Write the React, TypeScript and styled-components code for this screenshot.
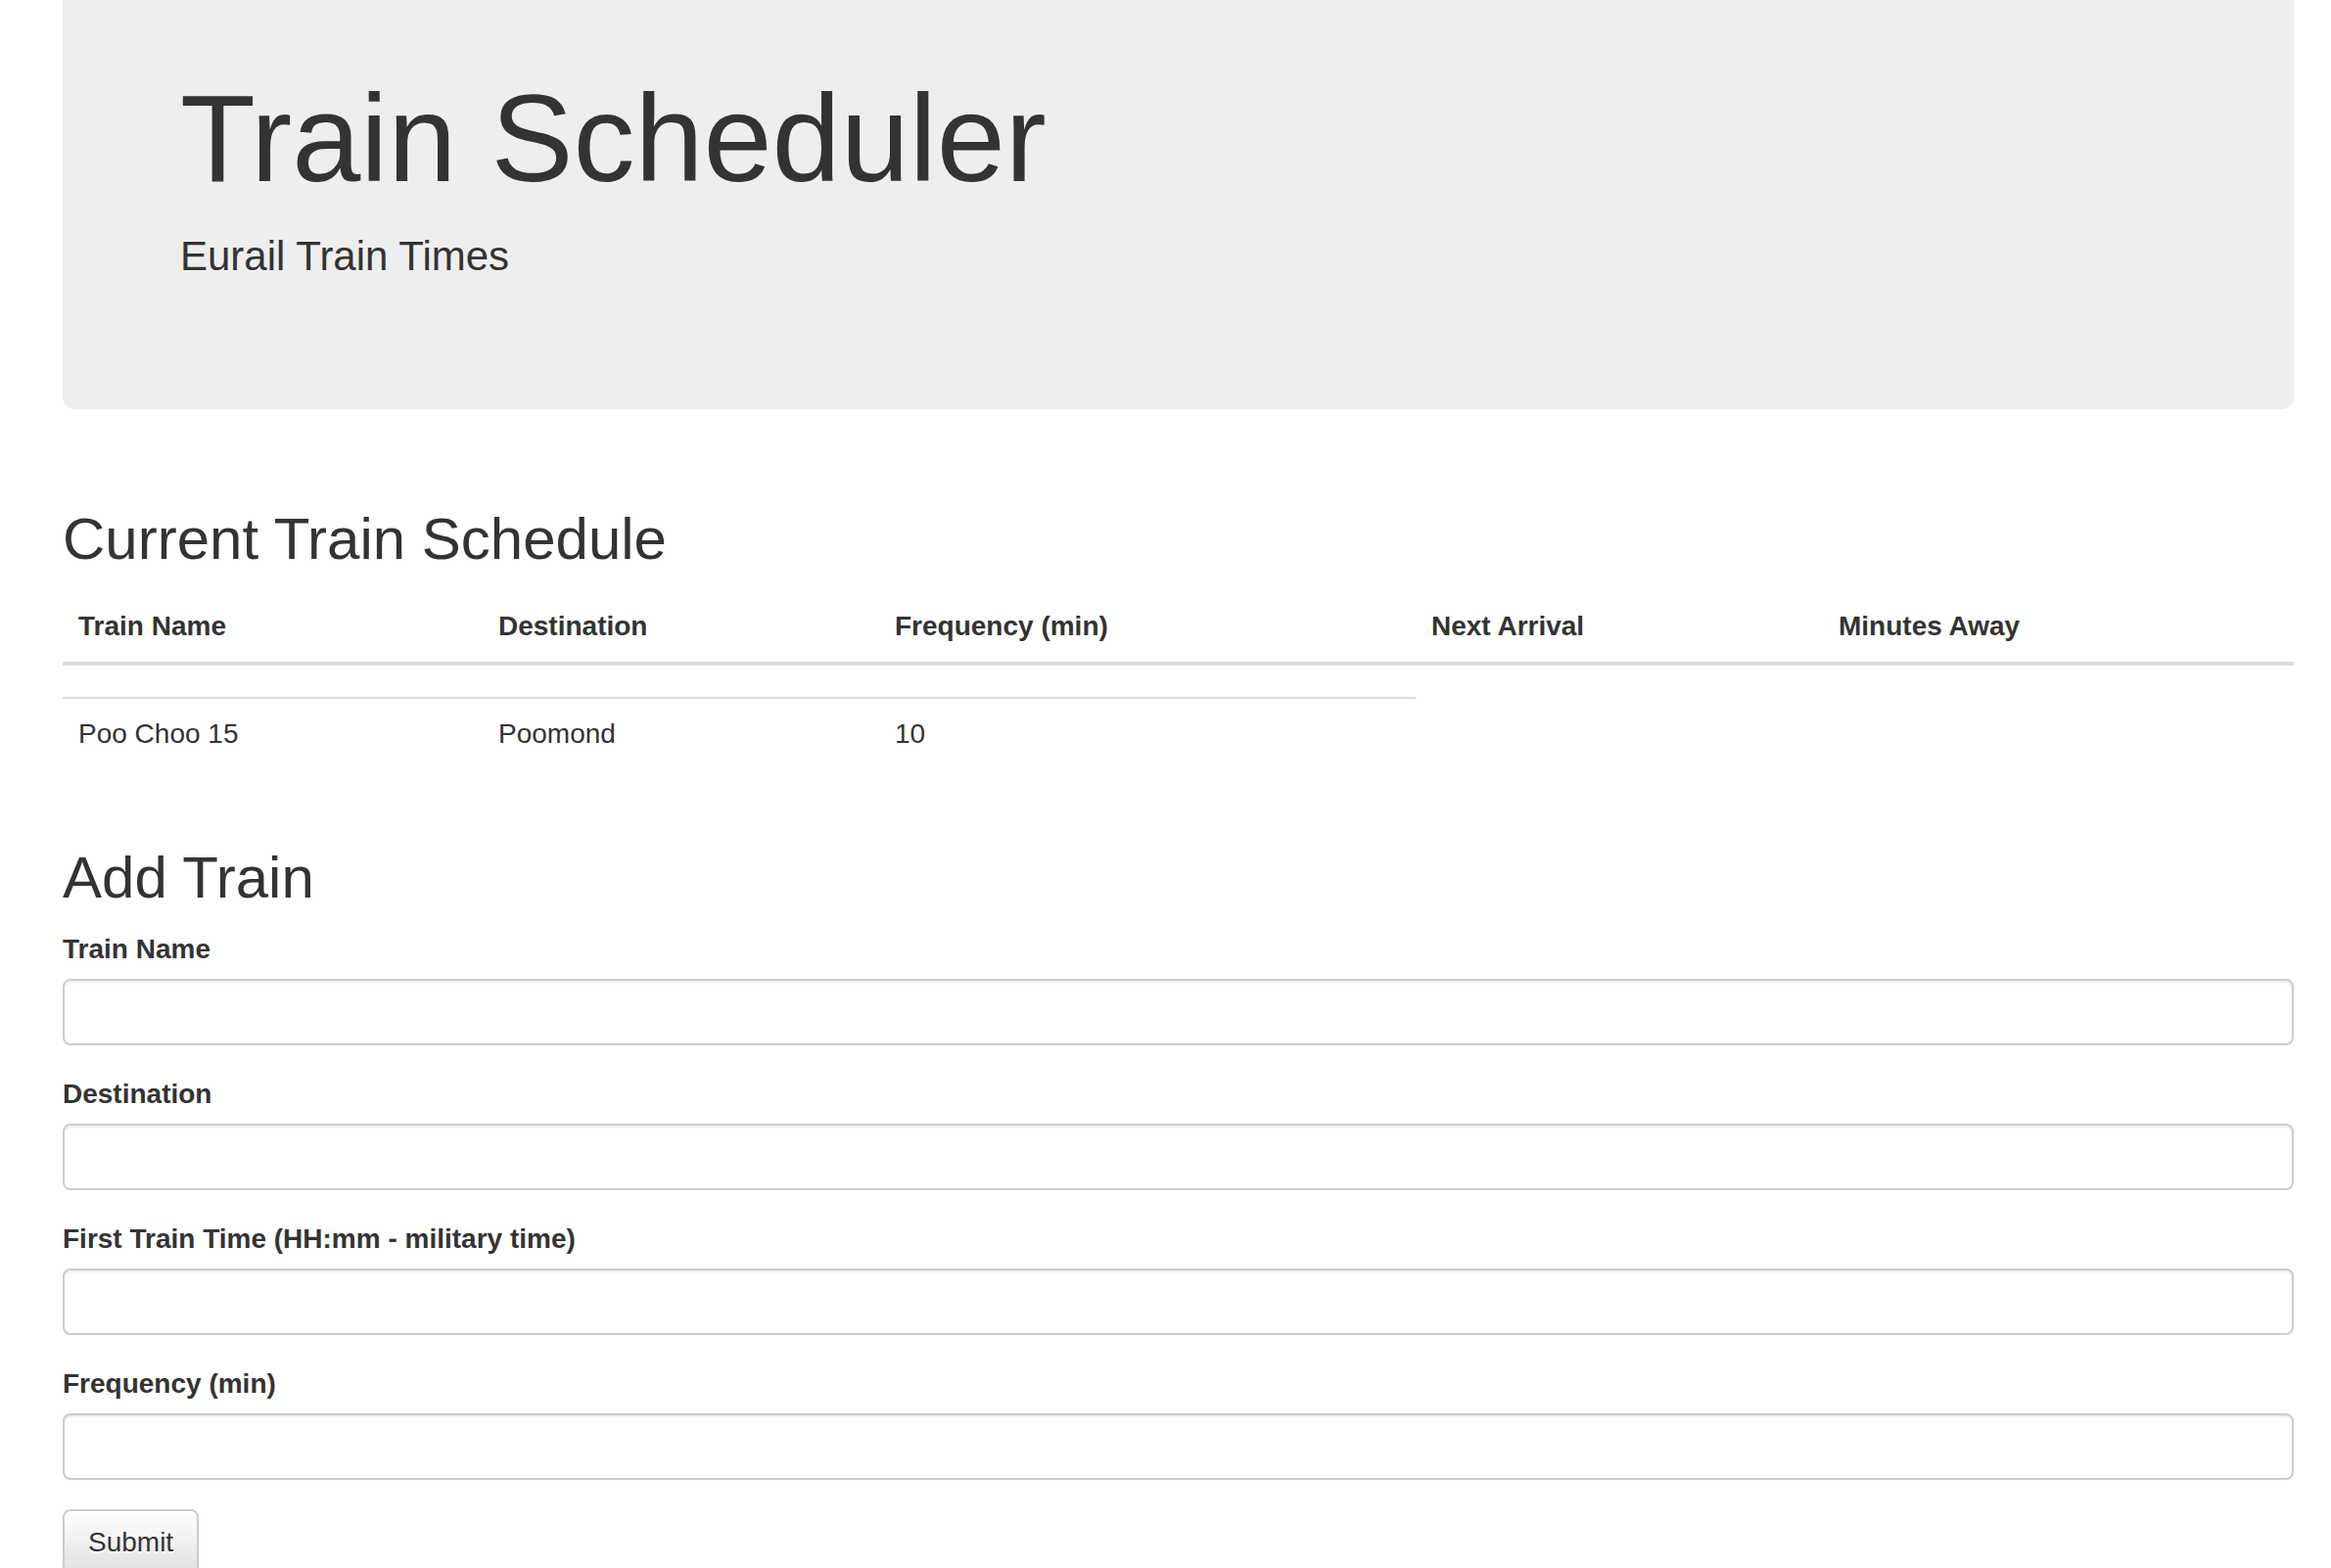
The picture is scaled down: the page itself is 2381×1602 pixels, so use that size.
import React from "react";
import styled, { createGlobalStyle } from "styled-components";

const Global = createGlobalStyle`
  *, *::before, *::after { box-sizing: border-box; }
  html { overflow: hidden; }
  body {
    margin: 0;
    background: #fff;
    color: #333;
    font-family: "Liberation Sans", Arial, Helvetica, sans-serif;
    font-size: 28px;
    line-height: 1.42857143;
  }
`;

const Container = styled.div`
  width: 2279px;
  margin-left: 64px;
  display: flex;
  flex-direction: column;
`;

const Jumbotron = styled.div`
  background: #eee;
  padding: 33px 120px 96px;
  margin-bottom: 60px;
  border-radius: 0 0 12px 12px;
`;

const Title = styled.h1`
  font-size: 126px;
  font-weight: 500;
  line-height: 1.1;
  margin: 40px 0 20px;
  color: inherit;
`;

const Lead = styled.p`
  font-size: 42px;
  font-weight: 200;
  margin: 0 0 30px;
`;

const SectionTitle = styled.h2`
  font-size: 60px;
  font-weight: 500;
  line-height: 1.1;
  margin: 40px 0 20px;
`;

const Table = styled.table`
  width: 100%;
  border-collapse: collapse;
  border-spacing: 0;
  table-layout: fixed;
  margin-bottom: 38px;
`;

const Col = styled.col<{ $w: number }>`
  width: ${(p) => p.$w}px;
`;

const Th = styled.th`
  text-align: left;
  font-weight: bold;
  padding: 16px;
  line-height: 40px;
  vertical-align: bottom;
  border-bottom: 4px solid #ddd;
`;

const Td = styled.td`
  padding: 16px;
  line-height: 40px;
  vertical-align: top;
  border-top: 2px solid #ddd;
`;

const Form = styled.form`
  display: block;
`;

const FormGroup = styled.div`
  margin-bottom: 30px;
`;

const Label = styled.label`
  display: inline-block;
  max-width: 100%;
  margin-bottom: 10px;
  font-weight: bold;
`;

const Input = styled.input`
  display: block;
  width: 100%;
  height: 68px;
  padding: 12px 24px;
  font-family: inherit;
  font-size: 28px;
  line-height: 1.42857143;
  color: #555;
  background: #fff;
  border: 2px solid #ccc;
  border-radius: 8px;
  box-shadow: inset 0 2px 2px rgba(0, 0, 0, 0.075);
  outline: none;
`;

const Button = styled.button`
  display: inline-block;
  padding: 12px 24px;
  font-family: inherit;
  font-size: 28px;
  line-height: 1.42857143;
  color: #333;
  background-image: linear-gradient(to bottom, #fff 0, #e0e0e0 100%);
  border: 2px solid #ccc;
  border-radius: 8px;
  text-shadow: 0 2px 0 #fff;
  box-shadow: inset 0 2px 0 rgba(255, 255, 255, 0.15), 0 2px 2px rgba(0, 0, 0, 0.075);
  cursor: pointer;
`;

const columns = [
  { label: "Train Name", w: 429 },
  { label: "Destination", w: 405 },
  { label: "Frequency (min)", w: 548 },
  { label: "Next Arrival", w: 416 },
  { label: "Minutes Away", w: 481 },
];

const fields = [
  "Train Name",
  "Destination",
  "First Train Time (HH:mm - military time)",
  "Frequency (min)",
];

export default function App() {
  return (
    <>
      <Global />
      <Container>
        <Jumbotron>
          <Title>Train Scheduler</Title>
          <Lead>Eurail Train Times</Lead>
        </Jumbotron>

        <SectionTitle>Current Train Schedule</SectionTitle>
        <Table>
          <colgroup>
            {columns.map((c) => (
              <Col key={c.label} $w={c.w} />
            ))}
          </colgroup>
          <thead>
            <tr>
              {columns.map((c) => (
                <Th key={c.label}>{c.label}</Th>
              ))}
            </tr>
          </thead>
          <tbody>
            <tr>
              <Td />
              <Td />
              <Td />
              <Td />
              <Td />
            </tr>
            <tr>
              <Td>Poo Choo 15</Td>
              <Td>Poomond</Td>
              <Td>10</Td>
            </tr>
          </tbody>
        </Table>

        <SectionTitle>Add Train</SectionTitle>
        <Form onSubmit={(e) => e.preventDefault()}>
          {fields.map((f, i) => (
            <FormGroup key={f}>
              <Label htmlFor={`f${i}`}>{f}</Label>
              <Input id={`f${i}`} type="text" />
            </FormGroup>
          ))}
          <Button type="submit">Submit</Button>
        </Form>
      </Container>
    </>
  );
}
